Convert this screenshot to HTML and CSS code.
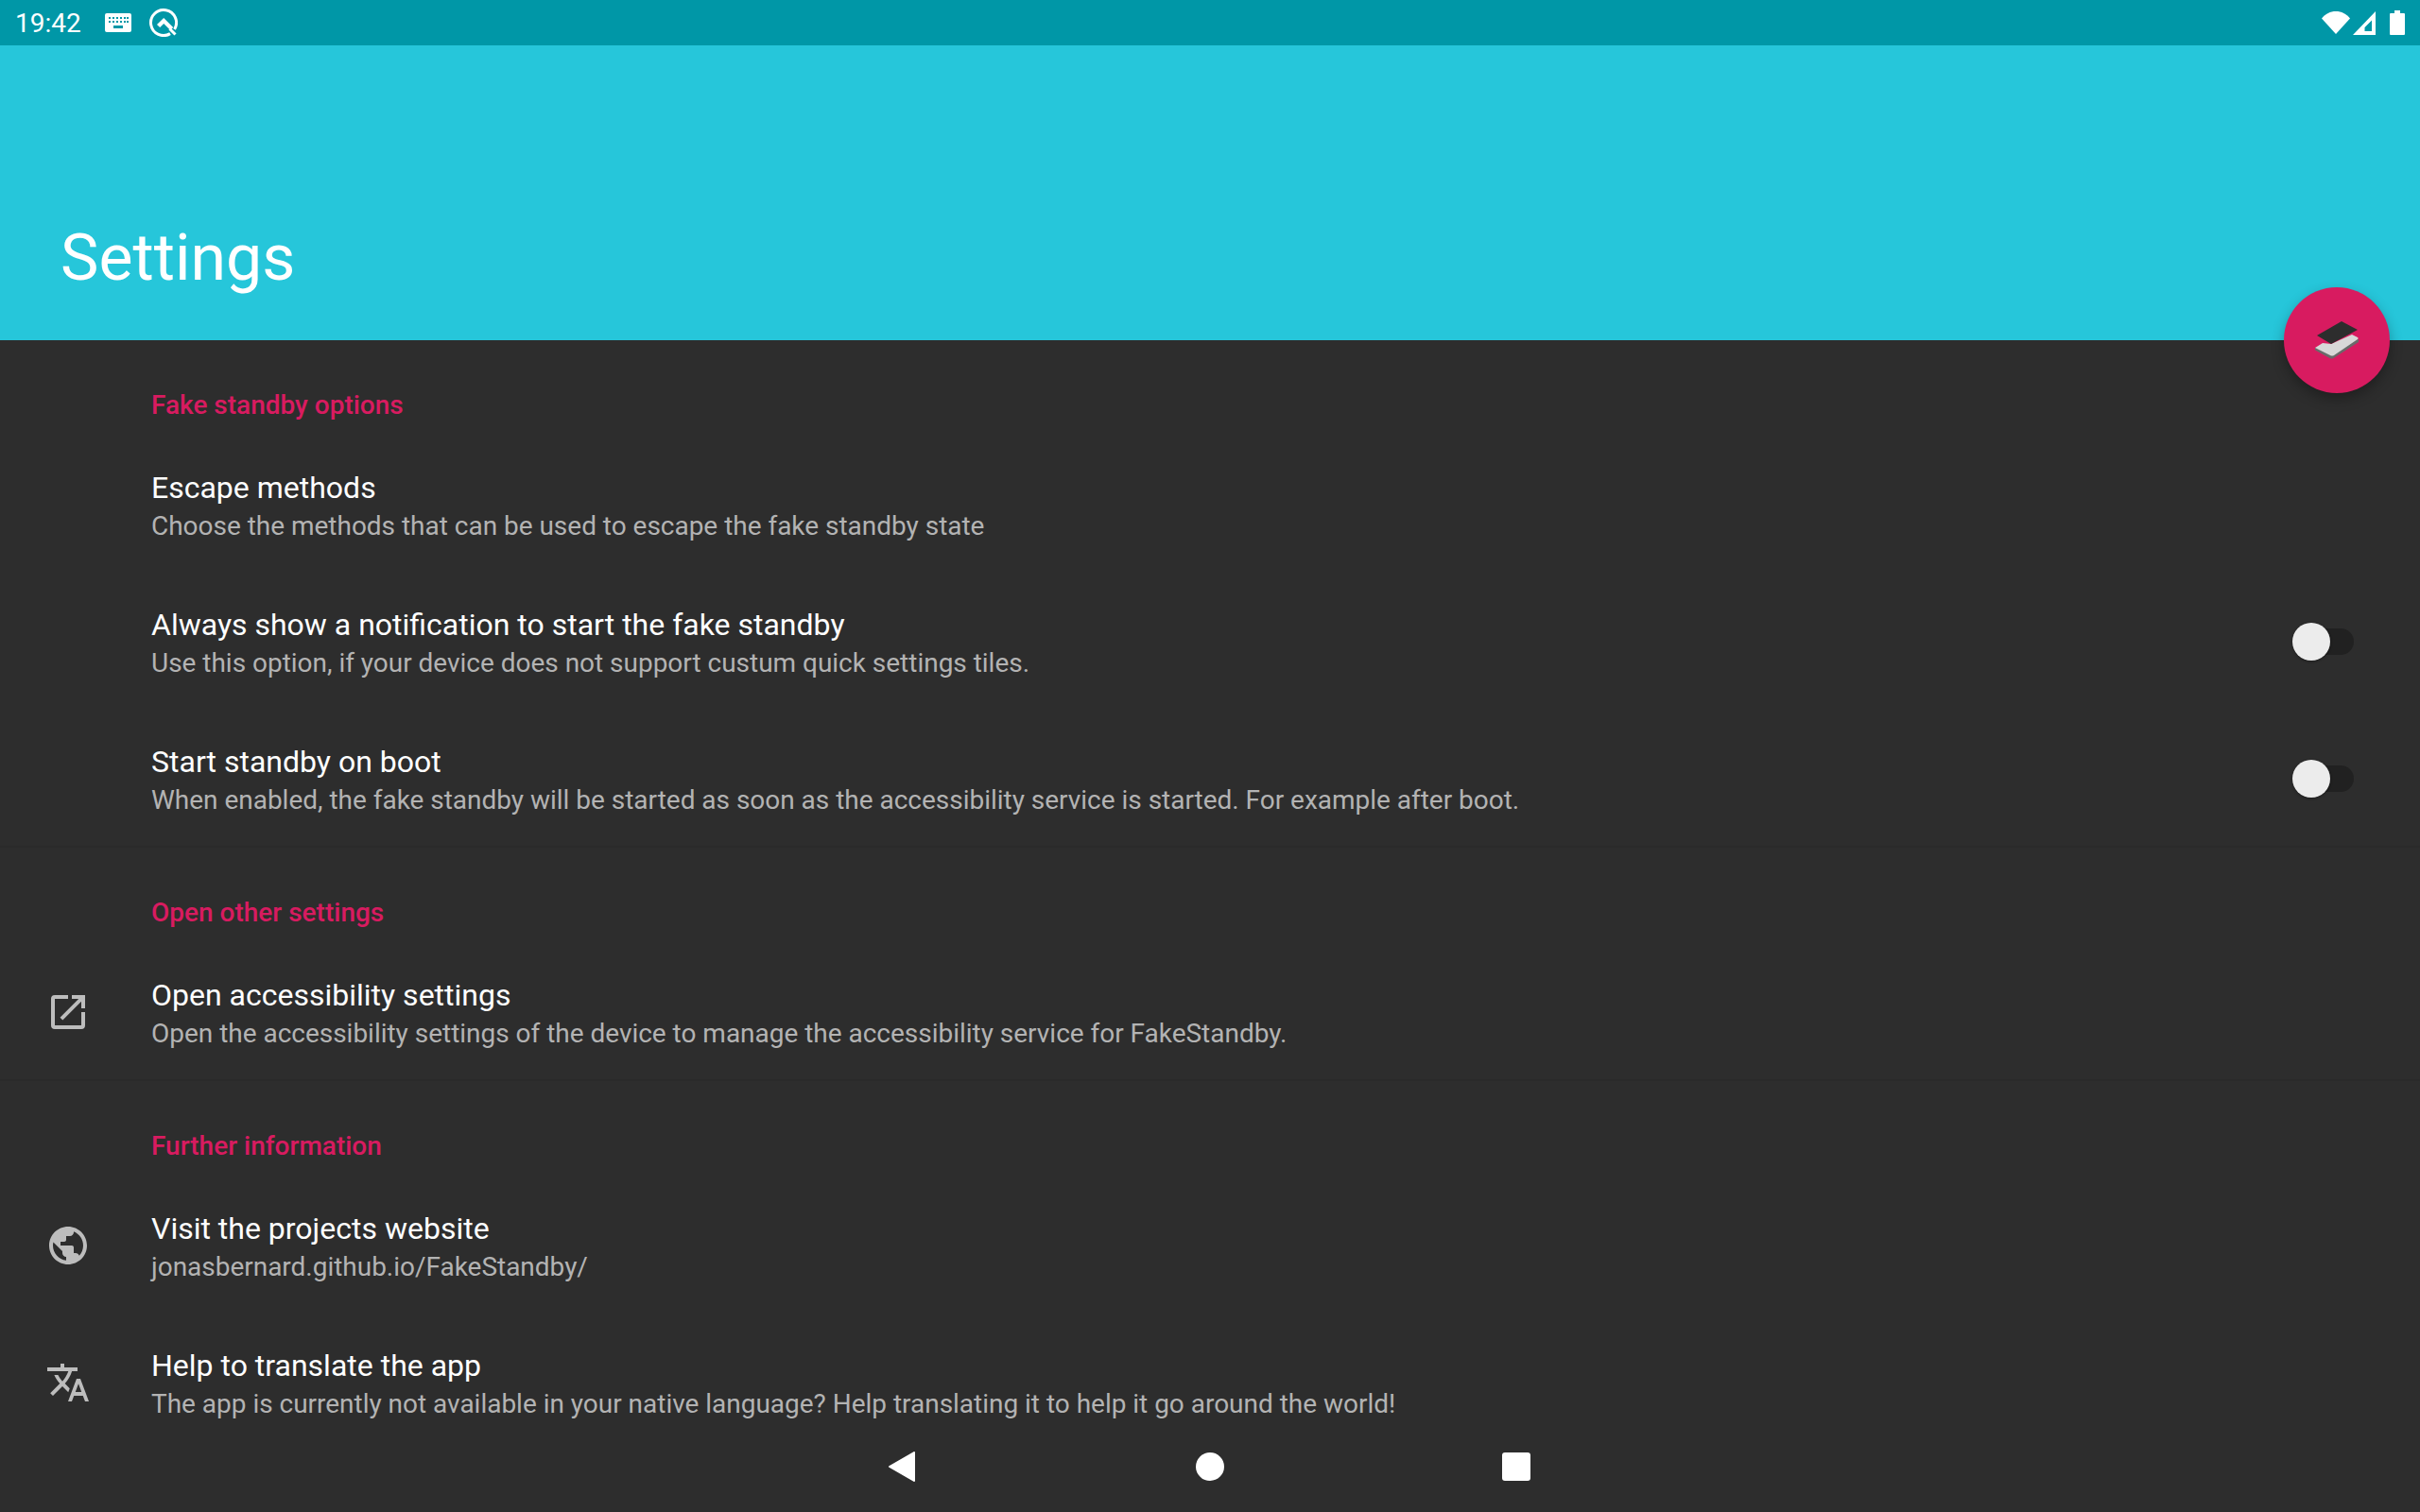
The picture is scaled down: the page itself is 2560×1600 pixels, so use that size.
FILE: index.html
```html
<!DOCTYPE html>
<html lang="en">
<head>
    <meta charset="UTF-8">
    <title>Settings</title>
    <link rel="stylesheet" href="styles.css">
</head>
<body>

    <!-- Status bar -->
    <div class="status-bar">
        <div class="status-left">
            <span class="clock">19:42</span>
            <svg class="icon-keyboard" width="28" height="20" viewBox="0 0 28 20">
                <path fill="#fff" fill-rule="evenodd" d="M2 0h24a2 2 0 0 1 2 2v16a2 2 0 0 1-2 2H2a2 2 0 0 1-2-2V2a2 2 0 0 1 2-2zM4 4v2h2V4zm4 0v2h2V4zm4 0v2h2V4zm4 0v2h2V4zm4 0v2h2V4zm3 0v2h2V4zM4 8v2h2V8zm4 0v2h2V8zm4 0v2h2V8zm4 0v2h2V8zm4 0v2h2V8zm3 0v2h2V8zM9 13v3h10v-3z"/>
            </svg>
            <svg class="icon-q" width="30" height="30" viewBox="0 0 30 30">
                <path fill="none" stroke="#fff" stroke-width="3" d="M22 26.600A13.500 13.500 0 1 1 26.600 22"/>
                <path fill="#fff" d="M8 17l7.200-7 10 10-3 3-7-7-4 4z"/>
                <path fill="none" stroke="#fff" stroke-width="3" d="M21.500 21.500l6 6"/>
            </svg>
        </div>
        <div class="status-right">
            <svg class="icon-wifi" width="30" height="26" viewBox="0 0 30 26"><path fill="#fff" d="M0 8.500C4 3.500 9 1 15 1s11 2.500 15 7.500L15 25z"/></svg>
            <svg class="icon-signal" width="24" height="25" viewBox="0 0 24 25"><path fill="#fff" fill-rule="evenodd" d="M24 0v25H0zM20 9.500l-7.500 7.500v4H20z"/></svg>
            <svg class="icon-battery" width="16" height="26" viewBox="0 0 16 26"><path fill="#fff" d="M5 0h6v3h4a1 1 0 0 1 1 1v21a1 1 0 0 1-1 1H1a1 1 0 0 1-1-1V4a1 1 0 0 1 1-1h4z"/></svg>
        </div>
    </div>

    <!-- Toolbar -->
    <header class="toolbar">
        <h1>Settings</h1>
        <button class="fab" type="button">
            <svg width="48" height="40" viewBox="0 0 48 40">
                <path fill="#6a6a6a" d="M1 28v2.500l15.500 8.500q2 1 4 0L47 22v-3z"/>
                <path fill="#d8d8d8" d="M1 28l8-5 9 1 22-10 6 3q1.500 1 0 2L21 36q-2 1-4 0z"/>
                <path fill="#2d2d2d" d="M29 0l17 9-28 15-15-9z"/>
            </svg>
        </button>
    </header>

    <div class="content">
        <!-- Fake standby options -->
        <section class="category">
            <h2>Fake standby options</h2>
            <div class="pref">
                <div class="pref-icon"></div>
                <div class="pref-text">
                    <div class="pref-title">Escape methods</div>
                    <div class="pref-summary">Choose the methods that can be used to escape the fake standby state</div>
                </div>
            </div>
            <div class="pref">
                <div class="pref-icon"></div>
                <div class="pref-text">
                    <div class="pref-title">Always show a notification to start the fake standby</div>
                    <div class="pref-summary">Use this option, if your device does not support custum quick settings tiles.</div>
                </div>
                <div class="switch"><span class="thumb"></span></div>
            </div>
            <div class="pref">
                <div class="pref-icon"></div>
                <div class="pref-text">
                    <div class="pref-title">Start standby on boot</div>
                    <div class="pref-summary">When enabled, the fake standby will be started as soon as the accessibility service is started. For example after boot.</div>
                </div>
                <div class="switch"><span class="thumb"></span></div>
            </div>
        </section>

        <!-- Open other settings -->
        <section class="category">
            <h2>Open other settings</h2>
            <div class="pref">
                <div class="pref-icon">
                    <svg width="48" height="48" viewBox="0 0 24 24">
                        <path fill="#bdbdbd" d="M19 19H5V5h7V3H5a2 2 0 0 0-2 2v14a2 2 0 0 0 2 2h14a2 2 0 0 0 2-2v-7h-2v7zM14 3v2h3.590l-9.830 9.830 1.410 1.410L19 6.410V10h2V3h-7z"/>
                    </svg>
                </div>
                <div class="pref-text">
                    <div class="pref-title">Open accessibility settings</div>
                    <div class="pref-summary">Open the accessibility settings of the device to manage the accessibility service for FakeStandby.</div>
                </div>
            </div>
        </section>

        <!-- Further information -->
        <section class="category">
            <h2>Further information</h2>
            <div class="pref">
                <div class="pref-icon">
                    <svg width="48" height="48" viewBox="0 0 24 24">
                        <path fill="#bdbdbd" d="M12 2C6.480 2 2 6.480 2 12s4.480 10 10 10 10-4.480 10-10S17.520 2 12 2zm-1 17.930c-3.950-.49-7-3.850-7-7.930 0-.62.080-1.210.21-1.790L9 15v1c0 1.100.9 2 2 2v1.930zm6.900-2.540c-.26-.81-1-1.390-1.900-1.390h-1v-3c0-.55-.45-1-1-1H8v-2h2c.55 0 1-.45 1-1V7h2c1.100 0 2-.9 2-2v-.41c2.930 1.190 5 4.060 5 7.410 0 2.080-.8 3.970-2.100 5.390z"/>
                    </svg>
                </div>
                <div class="pref-text">
                    <div class="pref-title">Visit the projects website</div>
                    <div class="pref-summary">jonasbernard.github.io/FakeStandby/</div>
                </div>
            </div>
            <div class="pref">
                <div class="pref-icon">
                    <svg width="48" height="48" viewBox="0 0 24 24">
                        <path fill="#bdbdbd" d="M12.870 15.070l-2.540-2.510.03-.03c1.740-1.940 2.980-4.170 3.710-6.530H17V4h-7V2H8v2H1v1.990h11.170C11.500 7.920 10.440 9.750 9 11.350 8.070 10.320 7.300 9.190 6.690 8h-2c.73 1.630 1.730 3.170 2.980 4.560l-5.090 5.020L4 19l5-5 3.110 3.110.76-2.040zM18.500 10h-2L12 22h2l1.120-3h4.750L21 22h2l-4.500-12zm-2.620 7l1.620-4.330L19.120 17h-3.240z"/>
                    </svg>
                </div>
                <div class="pref-text">
                    <div class="pref-title">Help to translate the app</div>
                    <div class="pref-summary">The app is currently not available in your native language? Help translating it to help it go around the world!</div>
                </div>
            </div>
        </section>
    </div>

    <!-- Navigation bar -->
    <nav class="nav-bar">
        <svg width="28" height="32" viewBox="0 0 28 32"><path fill="#fff" stroke="#fff" stroke-width="2" stroke-linejoin="round" d="M27 1v30L1 16z"/></svg>
        <span class="nav-home"></span>
        <span class="nav-recents"></span>
    </nav>

</body>
</html>
```

FILE: styles.css
```css
html,
body {
    margin: 0;
    height: 100%;
}

body {
    font-family: Roboto, sans-serif;
    background-color: #2d2d2d;
    display: flex;
    flex-direction: column;
    height: 1600px;
    overflow: hidden;
}

/* Status bar */
.status-bar {
    height: 48px;
    flex-shrink: 0;
    background-color: #0097a7;
    color: white;
    display: flex;
    align-items: center;
    justify-content: space-between;
    padding: 0 16px;
}

.status-left {
    display: flex;
    align-items: center;
}

.clock {
    font-size: 28px;
    width: 95px;
}

.icon-q {
    margin-left: 19px;
}

.status-right {
    display: flex;
    align-items: center;
}

.icon-signal {
    margin-left: 3px;
}

.icon-battery {
    margin-left: 15px;
}

/* Toolbar */
.toolbar {
    position: relative;
    height: 312px;
    flex-shrink: 0;
    background-color: #26c6da;
    display: flex;
    align-items: flex-end;
}

.toolbar h1 {
    margin: 0 0 47px 64px;
    font-size: 68px;
    font-weight: 400;
    line-height: 80px;
    color: white;
}

.fab {
    position: absolute;
    right: 32px;
    bottom: -56px;
    width: 112px;
    height: 112px;
    padding: 0;
    border: none;
    border-radius: 50%;
    background-color: #d81b60;
    box-shadow: 0 6px 14px rgba(0, 0, 0, 0.3);
    display: flex;
    align-items: center;
    justify-content: center;
    z-index: 1;
}

/* Preference list */
.content {
    flex: 1;
    overflow: hidden;
}

.category {
    border-bottom: 2px solid #2a2a2a;
}

.category:last-child {
    border-bottom: none;
}

.category h2 {
    margin: 0;
    padding: 49px 0 11px 160px;
    font-size: 28px;
    font-weight: 500;
    line-height: 40px;
    color: #d81b60;
}

.pref {
    display: flex;
    align-items: center;
    height: 145px;
}

.pref-icon {
    width: 160px;
    flex-shrink: 0;
    display: flex;
    justify-content: center;
    padding: 2px 16px 0 0;
    box-sizing: border-box;
}

.pref-text {
    flex: 1;
    padding-top: 7px;
}

.pref-title {
    font-size: 32px;
    line-height: 40px;
    color: white;
}

.pref-summary {
    margin-top: 1px;
    font-size: 28px;
    line-height: 40px;
    letter-spacing: -0.02px;
    color: #b3b3b3;
}

/* Switch */
.switch {
    position: relative;
    width: 55px;
    height: 28px;
    margin: 2px 70px 0 0;
    border-radius: 14px;
    background-color: #212121;
}

.thumb {
    position: absolute;
    left: -10px;
    top: -6px;
    width: 40px;
    height: 40px;
    border-radius: 50%;
    background-color: #ececec;
    box-shadow: 0 1px 3px rgba(0, 0, 0, 0.4);
}

/* Navigation bar */
.nav-bar {
    height: 96px;
    flex-shrink: 0;
    display: flex;
    align-items: center;
    justify-content: center;
    padding-right: 2px;
    background-color: #2d2d2d;
}

.nav-home {
    width: 30px;
    height: 30px;
    margin-left: 297px;
    border-radius: 50%;
    background-color: white;
}

.nav-recents {
    width: 30px;
    height: 30px;
    margin-left: 294px;
    border-radius: 3px;
    background-color: white;
}
```
